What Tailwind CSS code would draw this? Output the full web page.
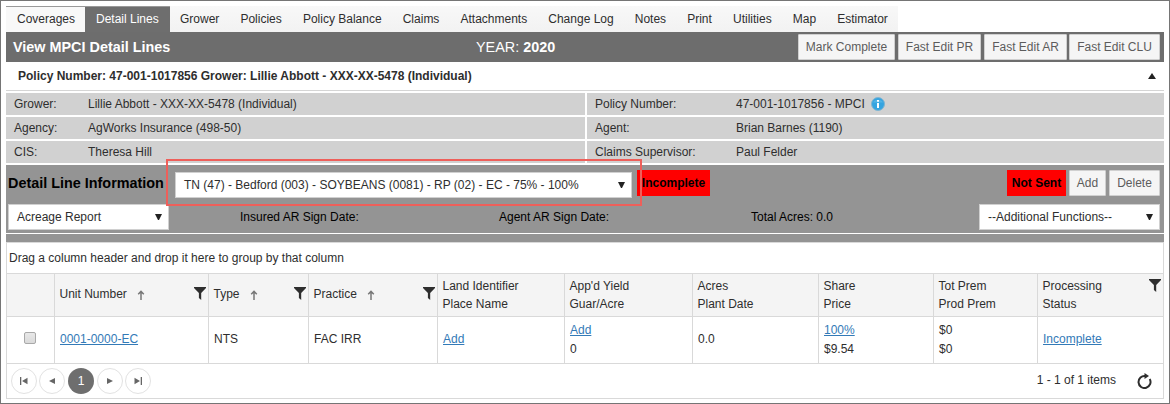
<!DOCTYPE html>
<html lang="en">
<head>
    <meta charset="UTF-8">
    <meta name="viewport" content="width=device-width, initial-scale=1.0">
    <title>View MPCI Detail Lines</title>
    <script src="https://cdn.jsdelivr.net/npm/@tailwindcss/browser@4"></script>
</head>
<body class="bg-white">
    <!-- Shared icons -->
    <svg class="hidden">
        <symbol id="filter" viewBox="0 0 12 13"><path d="M0 0h12v1L7.200 6v7L4.900 11V6L0 1z" fill="#2e2e2e"/></symbol>
        <symbol id="sort" viewBox="0 0 8 10"><path d="M4 10V1.500M1.200 4.200L4 1.400l2.800 2.800" fill="none" stroke="#777" stroke-width="1.500"/></symbol>
        <symbol id="caret" viewBox="0 0 7 6"><path d="M0 0h7L4 6H3z" fill="#222"/></symbol>
    </svg>

    <div class="w-[1170px] h-[404px] border border-[#757575] px-[5px] pt-[5px] overflow-hidden font-['Liberation_Sans',Arial,sans-serif] text-[12px] leading-[18px] text-[#2e2e2e]">
        <!-- Tabs -->
        <ul class="flex h-[26px] whitespace-nowrap">
            <li class="w-[79px] border-t border-[#999] bg-[#f8f8f8] pl-[11px] pt-[3px]">Coverages</li>
            <li class="w-[85px] border-t border-[#999] bg-[#6e6e6e] text-white pl-[11px] pt-[3px]">Detail Lines</li>
            <li class="flex w-[728px] gap-[21.1px] bg-linear-to-b from-[#f8f8f8] to-[#f2f2f2] pl-[10px] pt-1">
                <span>Grower</span>
                <span>Policies</span>
                <span>Policy Balance</span>
                <span>Claims</span>
                <span>Attachments</span>
                <span>Change Log</span>
                <span>Notes</span>
                <span>Print</span>
                <span>Utilities</span>
                <span>Map</span>
                <span>Estimator</span>
            </li>
        </ul>

        <!-- Title bar -->
        <div class="flex items-center h-[30px] bg-[#6d6d6d] text-white text-[14.4px] pl-[7px] pr-1">
            <h1 class="w-[463px] font-bold">View MPCI Detail Lines</h1>
            <div class="flex-1">YEAR: <b>2020</b></div>
            <div class="flex text-[12px] text-[#5c5c5c]">
                <button class="w-[97px] h-[26px] mr-[3px] border border-[#d0d0d0] bg-[#f5f5f5] rounded-[1px]">Mark Complete</button>
                <button class="w-[83px] h-[26px] mr-[3px] border border-[#d0d0d0] bg-[#f5f5f5] rounded-[1px]">Fast Edit PR</button>
                <button class="w-[83px] h-[26px] mr-[2px] border border-[#d0d0d0] bg-[#f5f5f5] rounded-[1px]">Fast Edit AR</button>
                <button class="w-[91px] h-[26px] border border-[#d0d0d0] bg-[#f5f5f5] rounded-[1px]">Fast Edit CLU</button>
            </div>
        </div>

        <!-- Policy summary -->
        <div class="flex items-center justify-between h-[29px] border-b border-[#d5d5d5] pl-3 pr-2">
            <b>Policy Number: 47-001-1017856 Grower: Lillie Abbott - XXX-XX-5478 (Individual)</b>
            <svg class="w-2 h-[6px]" viewBox="0 0 8 6"><path d="M4 0l4 6H0z" fill="#222"/></svg>
        </div>
        <div class="grid grid-cols-[579px_577px] gap-[2px] mt-[2px] leading-[22px]">
            <div class="flex h-[22px] bg-[#d1d1d1] pl-2"><span class="w-[74px]">Grower:</span>Lillie Abbott - XXX-XX-5478 (Individual)</div>
            <div class="flex items-center h-[22px] bg-[#d1d1d1] pl-2"><span class="w-[141px]">Policy Number:</span>47-001-1017856 - MPCI
                <svg class="w-[14px] h-[14px] ml-[6px]" viewBox="0 0 14 14">
                    <circle cx="7" cy="7" r="6.5" fill="#35a4e0" stroke="#7fb5d2" stroke-width="1"/>
                    <path d="M2 5.500a5.300 4.300 0 0 1 10 0z" fill="#52b3e6"/>
                    <path d="M7 3v1.800M7 6v5" fill="none" stroke="#fff" stroke-width="2"/>
                </svg>
            </div>
            <div class="flex h-[22px] bg-[#d1d1d1] pl-2"><span class="w-[74px]">Agency:</span>AgWorks Insurance (498-50)</div>
            <div class="flex h-[22px] bg-[#d1d1d1] pl-2"><span class="w-[141px]">Agent:</span>Brian Barnes (1190)</div>
            <div class="flex h-[22px] bg-[#d1d1d1] pl-2"><span class="w-[74px]">CIS:</span>Theresa Hill</div>
            <div class="flex h-[22px] bg-[#d1d1d1] pl-2"><span class="w-[141px]">Claims Supervisor:</span>Paul Felder</div>
        </div>

        <!-- Detail line information -->
        <div class="relative h-[68px] mt-[2px] bg-[#949494] px-[2px] pr-1 pt-[5px] text-black">
            <div class="flex h-[34px]">
                <h2 class="w-[167px] pt-1 text-[14.4px] leading-[18px] font-bold whitespace-nowrap">Detail Line Information</h2>
                <div class="flex items-center justify-between w-[457px] h-[26px] mt-[2px] border border-[#d0d0d0] bg-white pl-2 pr-[6px] text-[#2e2e2e]">
                    TN (47) - Bedford (003) - SOYBEANS (0081) - RP (02) - EC - 75% - 100%
                    <svg class="w-[7px] h-[6px]"><use href="#caret"/></svg>
                </div>
                <div class="w-[73px] h-[26px] ml-[5px] bg-[#f00] text-center font-bold leading-[26px]">Incomplete</div>
                <div class="w-[59px] h-[26px] ml-auto mr-[3px] bg-[#f00] text-center font-bold leading-[26px]">Not Sent</div>
                <button class="w-[37px] h-[26px] mr-[3px] border border-[#d0d0d0] bg-[#f5f5f5] rounded-[1px] text-[#5c5c5c]">Add</button>
                <button class="w-[51px] h-[26px] border border-[#d0d0d0] bg-[#f5f5f5] rounded-[1px] text-[#5c5c5c]">Delete</button>
            </div>
            <div class="flex items-center h-[26px]">
                <div class="flex items-center justify-between w-[161px] h-[26px] border border-[#d0d0d0] bg-white pl-2 pr-[6px] text-[#2e2e2e]">
                    Acreage Report
                    <svg class="w-[7px] h-[6px]"><use href="#caret"/></svg>
                </div>
                <span class="w-[259px] ml-[71px]">Insured AR Sign Date:</span>
                <span class="w-[252px]">Agent AR Sign Date:</span>
                <span>Total Acres: 0.0</span>
                <div class="flex items-center justify-between w-[181px] h-[26px] ml-auto border border-[#d0d0d0] bg-white pl-2 pr-[6px] text-[#2e2e2e]">
                    --Additional Functions--
                    <svg class="w-[7px] h-[6px]"><use href="#caret"/></svg>
                </div>
            </div>
            <!-- Callout around the line selector -->
            <div class="absolute left-[160px] -top-[6px] w-[476px] h-[47px] border-2 border-[#ee5f5a]"></div>
        </div>
        <div class="h-2 mt-px bg-[#949494]"></div>

        <!-- Grid -->
        <div class="h-[157px] border border-[#d9d9d9]">
            <div class="h-[30px] pl-[2px] pt-[6px]">Drag a column header and drop it here to group by that column</div>
            <table class="table-fixed w-[1156px] border-collapse">
                <colgroup>
                    <col class="w-[47px]"><col class="w-[154px]"><col class="w-[100px]"><col class="w-[129px]"><col class="w-[127px]">
                    <col class="w-[128px]"><col class="w-[126px]"><col class="w-[115px]"><col class="w-[104px]"><col class="w-[126px]">
                </colgroup>
                <thead>
                    <tr class="h-[43px] bg-[#f4f4f4] border-y border-[#d9d9d9] divide-x divide-[#d9d9d9] text-left">
                        <th></th>
                        <th class="font-normal pl-[5px] pr-[2px] pb-[2px]"><div class="flex items-center">Unit Number<svg class="w-2 h-[10px] ml-[10px] mt-[2px]"><use href="#sort"/></svg><svg class="w-3 h-[13px] ml-auto -mt-px"><use href="#filter"/></svg></div></th>
                        <th class="font-normal pl-[5px] pr-[2px] pb-[2px]"><div class="flex items-center">Type<svg class="w-2 h-[10px] ml-[10px] mt-[2px]"><use href="#sort"/></svg><svg class="w-3 h-[13px] ml-auto -mt-px"><use href="#filter"/></svg></div></th>
                        <th class="font-normal pl-[5px] pr-[2px] pb-[2px]"><div class="flex items-center">Practice<svg class="w-2 h-[10px] ml-[10px] mt-[2px]"><use href="#sort"/></svg><svg class="w-3 h-[13px] ml-auto -mt-px"><use href="#filter"/></svg></div></th>
                        <th class="font-normal pl-[5px]">Land Identifier<br>Place Name</th>
                        <th class="font-normal pl-[5px]">App'd Yield<br>Guar/Acre</th>
                        <th class="font-normal pl-[5px]">Acres<br>Plant Date</th>
                        <th class="font-normal pl-[5px]">Share<br>Price</th>
                        <th class="font-normal pl-[5px]">Tot Prem<br>Prod Prem</th>
                        <th class="font-normal pl-[5px] pr-[2px]"><div class="flex justify-between"><span>Processing<br>Status</span><svg class="w-3 h-[13px] mt-[2px]"><use href="#filter"/></svg></div></th>
                    </tr>
                </thead>
                <tbody>
                    <tr class="h-[47px] leading-[19px] border-b border-[#d9d9d9] divide-x divide-[#d9d9d9]">
                        <td class="pb-[2px]"><div class="w-3 h-3 ml-[17px] -mt-[2px] border border-[#a9a9a9] rounded-[2px] bg-linear-to-b from-[#e8e8e8] to-[#dadada]"></div></td>
                        <td class="pl-[5.500px] pb-[2px]"><a class="text-[#337ab7] underline" href="#">0001-0000-EC</a></td>
                        <td class="pl-[5.500px] pb-[2px]">NTS</td>
                        <td class="pl-[5.500px] pb-[2px]">FAC IRR</td>
                        <td class="pl-[5.500px] pb-[2px]"><a class="text-[#337ab7] underline" href="#">Add</a></td>
                        <td class="pl-[5.500px]"><a class="text-[#337ab7] underline" href="#">Add</a><br>0</td>
                        <td class="pl-[5.500px] pb-[2px]">0.0</td>
                        <td class="pl-[5.500px]"><a class="text-[#337ab7] underline" href="#">100%</a><br>$9.54</td>
                        <td class="pl-[5.500px]">$0<br>$0</td>
                        <td class="pl-[5.500px] pb-[2px]"><a class="text-[#337ab7] underline" href="#">Incomplete</a></td>
                    </tr>
                </tbody>
            </table>
            <!-- Pager -->
            <div class="flex items-center h-[34px] pl-1 pr-[11px]">
                <div class="flex gap-[2px]">
                    <div class="flex items-center justify-center size-[26px] rounded-full border border-[#e2e2e2]"><svg class="w-[8px] h-[8px]" viewBox="0 0 8 8"><path d="M0 0h1.300v8H0zM7.500.8v6.400L2 4z" fill="#666"/></svg></div>
                    <div class="flex items-center justify-center size-[26px] rounded-full border border-[#e2e2e2]"><svg class="w-[6px] h-[6px]" viewBox="0 0 6 6"><path d="M6 0v6L0 3z" fill="#666"/></svg></div>
                    <div class="size-[26px] mr-px ml-px rounded-full bg-[#6e6e6e] text-white text-center leading-[26px]">1</div>
                    <div class="flex items-center justify-center size-[26px] rounded-full border border-[#e2e2e2]"><svg class="w-[6px] h-[6px]" viewBox="0 0 6 6"><path d="M0 0v6l6-3z" fill="#666"/></svg></div>
                    <div class="flex items-center justify-center size-[26px] rounded-full border border-[#e2e2e2]"><svg class="w-[8px] h-[8px]" viewBox="0 0 8 8"><path d="M6.700 0H8v8H6.700zM.5.8v6.400L6 4z" fill="#666"/></svg></div>
                </div>
                <span class="ml-auto mr-[21px] pb-[2px]">1 - 1 of 1 items</span>
                <svg class="w-[15px] h-4 -mt-px" viewBox="0 0 15 16"><path d="M8.500 3.100A6 6 0 1 0 12.700 6" fill="none" stroke="#2e2e2e" stroke-width="2"/><path d="M7.500 0l4.500 3-4.500 3z" fill="#2e2e2e"/></svg>
            </div>
        </div>
    </div>
</body>
</html>
